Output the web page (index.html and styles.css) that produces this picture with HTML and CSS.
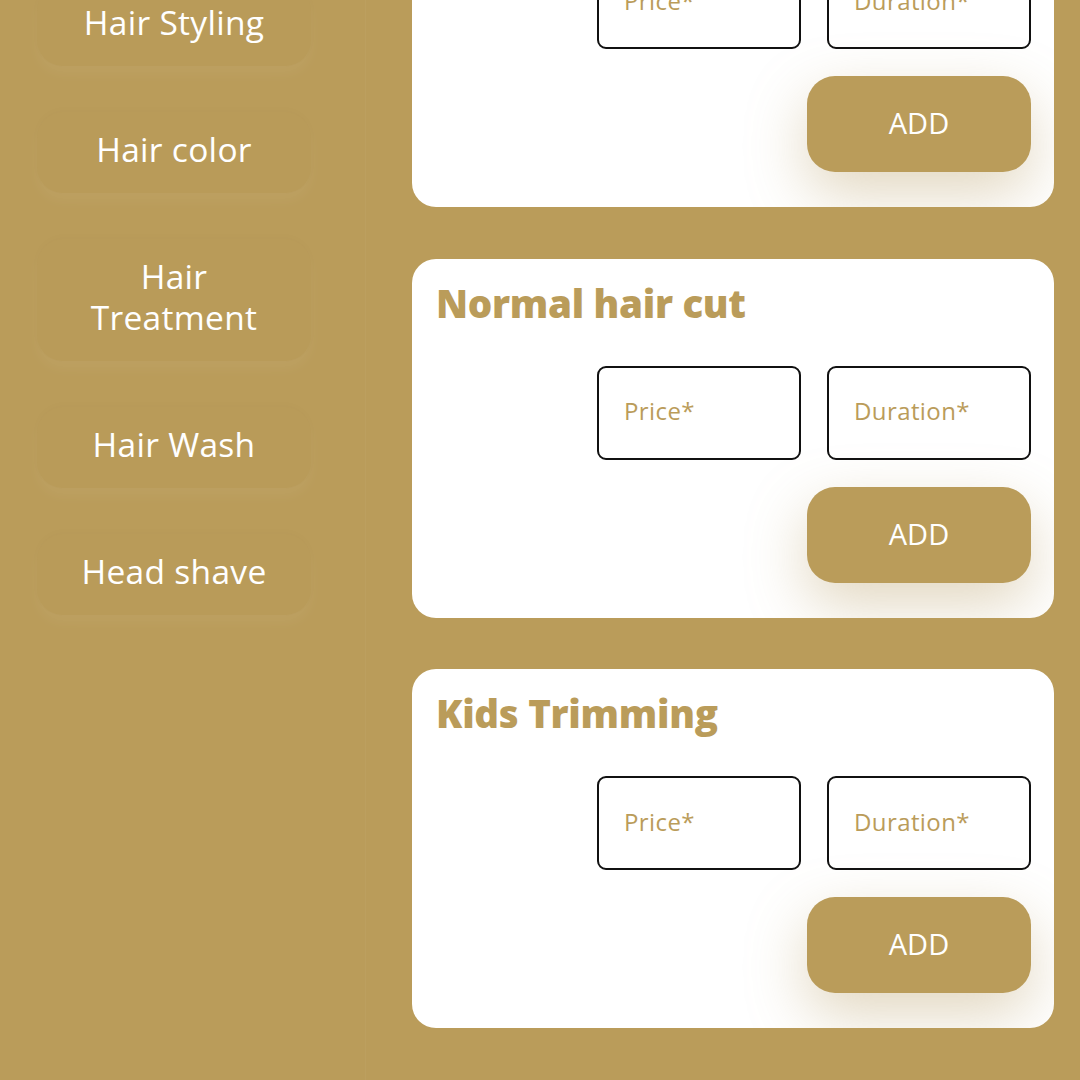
FILE: index.html
```html
<!DOCTYPE html>
<html lang="en">
<head>
<meta charset="utf-8">
<title>Services</title>
<link rel="stylesheet" href="styles.css">
</head>
<body>
<div class="page">
  <aside class="sidebar">
    <div class="cat">Hair Styling</div>
    <div class="cat">Hair color</div>
    <div class="cat">Hair<br>Treatment</div>
    <div class="cat">Hair Wash</div>
    <div class="cat">Head shave</div>
  </aside>
  <main class="list">
    <section class="card">
      <h2 class="title">Beard trim</h2>
      <div class="fields">
        <div class="field">Price*</div>
        <div class="field">Duration*</div>
      </div>
      <div class="actions"><button class="add">ADD</button></div>
    </section>
    <section class="card">
      <h2 class="title">Normal hair cut</h2>
      <div class="fields">
        <div class="field">Price*</div>
        <div class="field">Duration*</div>
      </div>
      <div class="actions"><button class="add">ADD</button></div>
    </section>
    <section class="card">
      <h2 class="title">Kids Trimming</h2>
      <div class="fields">
        <div class="field">Price*</div>
        <div class="field">Duration*</div>
      </div>
      <div class="actions"><button class="add">ADD</button></div>
    </section>
    <section class="card">
      <h2 class="title">Hair Spa</h2>
      <div class="fields">
        <div class="field">Price*</div>
        <div class="field">Duration*</div>
      </div>
      <div class="actions"><button class="add">ADD</button></div>
    </section>
  </main>
</div>
</body>
</html>
```
FILE: styles.css
```css
* { box-sizing: border-box; }
html, body {
  margin: 0;
  padding: 0;
  background: #ba9c5a;
  height: 1080px;
  overflow: hidden;
  font-family: "Open Sans", "Noto Sans", sans-serif;
}
.page {
  display: flex;
  margin-top: -152px;
}
.sidebar {
  width: 366px;
  flex: none;
  padding: 137px 0 0 37px;
  display: flex;
  flex-direction: column;
  gap: 46px;
  border-right: 1px solid rgba(255,255,255,0.03);
  min-height: 1300px;
}
.cat {
  width: 274px;
  padding: 17px 6px 23px;
  border-radius: 26px;
  text-align: center;
  color: #fff;
  font-size: 33.5px;
  line-height: 41px;
  letter-spacing: 0.3px;
  background: #b99b59;
  box-shadow: 0 8px 14px rgba(255,255,255,0.05), 0 -2px 10px rgba(0,0,0,0.015);
}
.list {
  flex: 1;
  padding: 0 26px 0 46px;
  display: flex;
  flex-direction: column;
  gap: 51.5px;
}
.card {
  background: #fff;
  border-radius: 24px;
  height: 359px;
  padding: 18px 23px 36px 24px;
  overflow: hidden;
  display: flex;
  flex-direction: column;
}
.title {
  margin: 0;
  color: #ba9c5a;
  font-size: 38.5px;
  line-height: 52px;
  font-weight: 800;
  letter-spacing: -0.3px;
}
.fields {
  margin-top: 37px;
  display: flex;
  justify-content: flex-end;
  gap: 26px;
}
.field {
  width: 204px;
  height: 94px;
  border: 2px solid #111;
  border-radius: 9px;
  padding-left: 25px;
  padding-bottom: 4px;
  display: flex;
  align-items: center;
  color: #ba9c5a;
  font-size: 24px;
  letter-spacing: 0.4px;
}
.actions {
  margin-top: 27px;
  display: flex;
  justify-content: flex-end;
}
.add {
  width: 224px;
  height: 96px;
  border: none;
  border-radius: 28px;
  background: #ba9c5a;
  color: #fff;
  font-family: inherit;
  font-size: 29px;
  padding-bottom: 4px;
  box-shadow: 0 22px 60px rgba(180,150,90,0.38);
}
```
